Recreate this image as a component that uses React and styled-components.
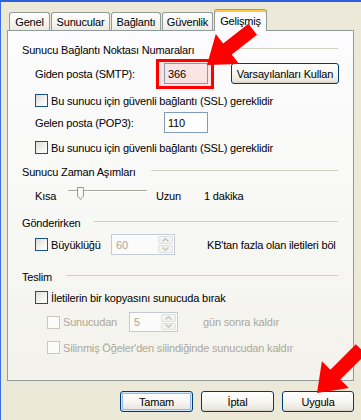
import React from "react";
import styled, { createGlobalStyle } from "styled-components";

const GlobalStyle = createGlobalStyle`
  html, body {
    margin: 0;
    padding: 0;
    background: #ece9d8;
  }
  body {
    font-family: Tahoma, "Liberation Sans", Arial, sans-serif;
    font-size: 11px;
    letter-spacing: -0.18px;
    color: #000;
  }
`;

const Window = styled.div`
  position: relative;
  width: 361px;
  height: 420px;
  box-sizing: border-box;
  border-top: 2px solid #2b5fdc;
  border-left: 1px solid #3b6fe2;
  background: #ece9d8;
  overflow: hidden;
`;

const TabStrip = styled.div`
  display: flex;
  align-items: flex-end;
  gap: 1px;
  height: 28px;
  padding-left: 8px;
`;

const Tab = styled.div`
  position: relative;
  z-index: ${(p) => (p.$active ? 2 : 0)};
  width: ${(p) => p.$w}px;
  height: ${(p) => (p.$active ? 22 : 18)}px;
  margin-bottom: ${(p) => (p.$active ? -1 : 0)}px;
  box-sizing: border-box;
  display: flex;
  align-items: center;
  justify-content: center;
  padding-top: ${(p) => (p.$active ? 1 : 1)}px;
  border: 1px solid #919b9c;
  border-bottom: none;
  border-top-color: ${(p) => (p.$active ? "#e68b2c" : "#919b9c")};
  border-radius: 3px 3px 0 0;
  background: ${(p) =>
    p.$active
      ? "#fcfcfe"
      : "linear-gradient(180deg, #ffffff 0%, #f7f6f2 50%, #ecebe4 100%)"};
  box-shadow: ${(p) => (p.$active ? "inset 0 2px 0 0 #ffc73c" : "none")};
`;

const Panel = styled.div`
  position: relative;
  z-index: 1;
  width: 347px;
  height: 351px;
  margin-left: 6px;
  box-sizing: border-box;
  border: 1px solid #919b9c;
  background: linear-gradient(180deg, #fcfcfe 0%, #f7f7f4 60%, #f3f2ec 100%);
  padding: 12px 15px 0 14px;
  display: flex;
  flex-direction: column;
`;

const Row = styled.div`
  display: flex;
  align-items: center;
  height: ${(p) => p.$h}px;
  margin-top: ${(p) => p.$mt || 0}px;
  padding-left: ${(p) => p.$indent || 0}px;
`;

const Header = styled(Row)`
  justify-content: space-between;
`;

const Rule = styled.div`
  width: ${(p) => p.$w}px;
  height: 1px;
  margin-top: -3px;
  background: #d0d0bf;
`;

const Label = styled.span`
  flex: none;
  width: ${(p) => (p.$w ? `${p.$w}px` : "auto")};
  margin-left: ${(p) => p.$ml || 0}px;
  color: ${(p) => (p.$disabled ? "#aca899" : "#000")};
  white-space: nowrap;
`;

const TextBox = styled.div`
  position: relative;
  z-index: 1;
  width: 44px;
  height: 21px;
  box-sizing: border-box;
  display: flex;
  align-items: center;
  padding-left: 3px;
  border: 1px solid #7f9db9;
  background: ${(p) => (p.$marked ? "#fde4e4" : "#fff")};
  flex: none;
`;

const Marked = styled.div`
  position: relative;
  flex: none;
`;

const MarkFrame = styled.div`
  position: absolute;
  left: -8px;
  right: -6px;
  top: -4px;
  bottom: -5px;
  border: 3px solid #f00;
  background: #fde4e4;
`;

const Button = styled.button`
  flex: none;
  width: ${(p) => p.$w}px;
  height: 21px;
  margin-left: ${(p) => p.$ml || 0}px;
  box-sizing: border-box;
  padding: 0;
  border: 1px solid #003c74;
  border-radius: 3px;
  font: inherit;
  letter-spacing: inherit;
  color: #000;
  background: linear-gradient(180deg, #ffffff 0%, #f6f5f1 55%, #e8e6dd 90%, #d6d0c5 100%);
  box-shadow: ${(p) =>
    p.$default ? "inset 0 0 0 1px #cee7ff, inset 0 0 0 2px #98b8ea" : "none"};
`;

const Check = styled.span`
  flex: none;
  width: 13px;
  height: 13px;
  box-sizing: border-box;
  border: 1px solid ${(p) => (p.$disabled ? "#cac8bb" : "#1c5180")};
  background: ${(p) =>
    p.$disabled ? "#fbfbf9" : "linear-gradient(135deg, #dcdcd7 0%, #f4f4f0 60%, #ffffff 100%)"};
  margin-right: 3px;
`;

const SpinBox = styled.div`
  flex: none;
  width: ${(p) => p.$w}px;
  height: ${(p) => p.$h || 21}px;
  margin-left: ${(p) => p.$ml || 0}px;
  box-sizing: border-box;
  display: flex;
  align-items: center;
  justify-content: space-between;
  padding: 1px 1px 1px 4px;
  border: 1px solid #c3cbd6;
  background: #fbfbf9;
  color: #aca899;
`;

const SpinButtons = styled.div`
  display: flex;
  flex-direction: column;
  gap: 1px;
  width: 15px;
  height: 100%;
`;

const SpinButton = styled.div`
  flex: 1;
  display: flex;
  align-items: center;
  justify-content: center;
  border: 1px solid #dcdfe5;
  border-radius: 2px;
  background: #f3f3f0;
`;

const Slider = styled.div`
  position: relative;
  flex: none;
  width: 79px;
  height: 20px;
  &::before {
    content: "";
    position: absolute;
    left: 0;
    right: 0;
    top: 4px;
    height: 1px;
    background: #a7a69f;
    box-shadow: 0 1px 0 #fff;
  }
`;

const Thumb = styled.svg`
  position: absolute;
  left: 9px;
  top: 1px;
`;

const Footer = styled.div`
  display: flex;
  justify-content: flex-end;
  gap: 8px;
  margin-top: 10px;
  padding-right: 7px;
`;

const Overlay = styled.svg`
  position: absolute;
  left: -1px;
  top: -2px;
  z-index: 5;
  pointer-events: none;
`;

function arrow(tx, ty, angle, len) {
  const a = (angle * Math.PI) / 180;
  const dx = Math.cos(a);
  const dy = Math.sin(a);
  const nx = -dy;
  const ny = dx;
  const s = 7;
  const h = 19;
  const hl = 26;
  const Hx = tx - hl * dx;
  const Hy = ty - hl * dy;
  const Tx = tx - len * dx;
  const Ty = ty - len * dy;
  const pts = [
    [Tx + s * nx, Ty + s * ny],
    [Hx + s * nx, Hy + s * ny],
    [Hx + h * nx, Hy + h * ny],
    [tx, ty],
    [Hx - h * nx, Hy - h * ny],
    [Hx - s * nx, Hy - s * ny],
    [Tx - s * nx, Ty - s * ny],
  ];
  return pts.map((p) => p.map((v) => v.toFixed(1)).join(",")).join(" ");
}

function Spin({ value, w, h, ml }) {
  return (
    <SpinBox $w={w} $h={h} $ml={ml}>
      <span>{value}</span>
      <SpinButtons>
        <SpinButton>
          <svg width="7" height="4" viewBox="0 0 7 4">
            <polyline points="0.5,3.5 3.5,0.8 6.5,3.5" fill="none" stroke="#c4c2b6" strokeWidth="1.3" />
          </svg>
        </SpinButton>
        <SpinButton>
          <svg width="7" height="4" viewBox="0 0 7 4">
            <polyline points="0.5,0.5 3.5,3.2 6.5,0.5" fill="none" stroke="#c4c2b6" strokeWidth="1.3" />
          </svg>
        </SpinButton>
      </SpinButtons>
    </SpinBox>
  );
}

const tabs = [
  { label: "Genel", w: 41 },
  { label: "Sunucular", w: 59 },
  { label: "Bağlantı", w: 50 },
  { label: "Güvenlik", w: 51 },
  { label: "Gelişmiş", w: 53, active: true },
];

export default function App() {
  return (
    <Window>
      <GlobalStyle />
      <TabStrip>
        {tabs.map((t) => (
          <Tab key={t.label} $w={t.w} $active={t.active}>
            {t.label}
          </Tab>
        ))}
      </TabStrip>
      <Panel>
        <Header $h={14}>
          <Label>Sunucu Bağlantı Noktası Numaraları</Label>
          <Rule $w={107} />
        </Header>
        <Row $h={21} $mt={6} $indent={13}>
          <Label $w={129}>Giden posta (SMTP):</Label>
          <Marked>
            <MarkFrame />
            <TextBox $marked>366</TextBox>
          </Marked>
          <Button $w={108} $ml={23}>Varsayılanları Kullan</Button>
        </Row>
        <Row $h={13} $mt={10} $indent={13}>
          <Check />
          <Label>Bu sunucu için güvenli bağlantı (SSL) gereklidir</Label>
        </Row>
        <Row $h={21} $mt={5} $indent={13}>
          <Label $w={129}>Gelen posta (POP3):</Label>
          <TextBox>110</TextBox>
        </Row>
        <Row $h={13} $mt={8} $indent={13}>
          <Check />
          <Label>Bu sunucu için güvenli bağlantı (SSL) gereklidir</Label>
        </Row>

        <Header $h={14} $mt={11}>
          <Label>Sunucu Zaman Aşımları</Label>
          <Rule $w={187} />
        </Header>
        <Row $h={20} $mt={7} $indent={13}>
          <Label $w={33}>Kısa</Label>
          <Slider>
            <Thumb width="7" height="13" viewBox="0 0 7 13">
              <path d="M0.5 0.5 H6.5 V9 L3.5 12.5 L0.5 9 Z" fill="#f7f7f4" stroke="#9b9a92" strokeWidth="1" />
            </Thumb>
          </Slider>
          <Label $w={48} $ml={9}>Uzun</Label>
          <Label>1 dakika</Label>
        </Row>

        <Header $h={14} $mt={10}>
          <Label>Gönderirken</Label>
          <Rule $w={244} />
        </Header>
        <Row $h={21} $mt={4} $indent={13}>
          <Check />
          <Label $w={60}>Büyüklüğü</Label>
          <Spin value="60" w={64} />
          <Label $ml={32}>KB'tan fazla olan iletileri böl</Label>
        </Row>

        <Header $h={14} $mt={15}>
          <Label>Teslim</Label>
          <Rule $w={272} />
        </Header>
        <Row $h={13} $mt={7} $indent={13}>
          <Check />
          <Label>İletilerin bir kopyasını sunucuda bırak</Label>
        </Row>
        <Row $h={20} $mt={8} $indent={25}>
          <Check $disabled />
          <Label $w={66} $disabled>Sunucudan</Label>
          <Spin value="5" w={49} h={20} />
          <Label $ml={25} $disabled>gün sonra kaldır</Label>
        </Row>
        <Row $h={13} $mt={9} $indent={25}>
          <Check $disabled />
          <Label $disabled>Silinmiş Öğeler'den silindiğinde sunucudan kaldır</Label>
        </Row>
      </Panel>
      <Footer>
        <Button $w={73} $default>Tamam</Button>
        <Button $w={73}>İptal</Button>
        <Button $w={72}>Uygula</Button>
      </Footer>
      <Overlay width="361" height="420" viewBox="0 0 361 420">
        <polygon points={arrow(207, 65, 142, 58)} fill="#f00" />
        <polygon points={arrow(317, 393, 135, 62)} fill="#f00" />
      </Overlay>
    </Window>
  );
}
